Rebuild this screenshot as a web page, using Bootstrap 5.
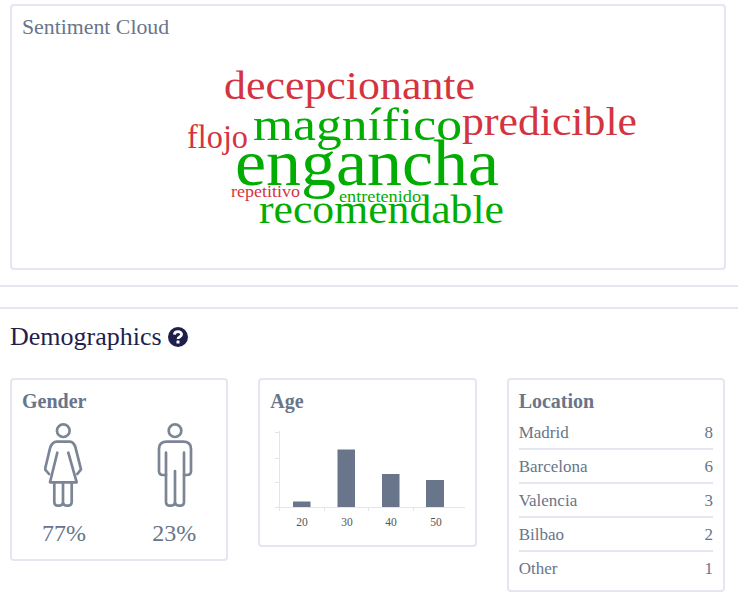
<!DOCTYPE html>
<html lang="en">

<head>
    <meta charset="UTF-8">
    <meta name="viewport" content="width=device-width, initial-scale=1.0">
    <title>Sentiment and Demographics</title>

    <link href="https://cdn.jsdelivr.net/npm/bootstrap@5.3.2/dist/css/bootstrap.min.css" rel="stylesheet">

    <style>
        body {
            background: #fff;
            font-family: "Liberation Serif", serif;
            color: #68758a;
            overflow: hidden;
        }

        .page-pad {
            padding: 4px 12px 0 10px;
        }

        .cards-pad {
            padding: 0 13px 0 10px;
        }

        .panel {
            border: 2px solid #e6e6f3;
            border-radius: 4px;
            background: #fff;
        }

        .panel-inner {
            padding: 10px;
        }

        .panel-title {
            font-size: 20px;
            line-height: 22px;
            padding-bottom: 2px;
            margin: 0;
            color: #68758a;
        }

        .cloud-title {
            font-size: 21.8px;
            font-weight: 400;
            margin-bottom: 10px;
        }

        .cloud-panel svg,
        .age-chart {
            display: block;
        }

        .age-chart {
            overflow: visible;
        }

        .cloud-word {
            font-family: "Liberation Serif", serif;
        }

        .good {
            fill: #00ad00;
        }

        .bad {
            fill: #d4343f;
        }

        .page-rule {
            border: 0;
            border-top: 2px solid #e6e6f3;
            opacity: 1;
            margin: 0;
        }

        .rule-one {
            margin-top: 15px;
        }

        .rule-two {
            margin-top: 20px;
        }

        .demo-head {
            padding: 13px 10px 26px;
            font-size: 26px;
            line-height: 30px;
            color: #1f1f4d;
            gap: 6px;
        }

        .cards-row {
            --bs-gutter-x: 30px;
        }

        .person-cols {
            margin-top: 7px;
        }

        .person {
            width: 84px;
            text-align: center;
        }

        .person svg {
            display: block;
            margin: 0 auto;
        }

        .person-shape {
            fill: none;
            stroke: #7b8595;
            stroke-width: 2.7;
            stroke-linecap: round;
            stroke-linejoin: round;
        }

        .pct {
            font-size: 24px;
            line-height: 30px;
            margin-top: 11px;
            padding-bottom: 1px;
            color: #68758a;
        }

        .place-list {
            margin-top: 2px;
        }

        .place-row {
            display: flex;
            justify-content: space-between;
            font-size: 17px;
            line-height: 24px;
            padding: 5px 0 3px;
            border-bottom: 2px solid #e6e6f3;
        }

        .place-row:last-child {
            border-bottom: 0;
            padding-bottom: 0;
            margin-bottom: -1px;
        }

        .axis-line {
            stroke: #e4e4ec;
            stroke-width: 1;
        }

        .age-bar {
            fill: #68758a;
        }

        .age-label {
            font-size: 11.5px;
            fill: #555;
            text-anchor: middle;
        }
    </style>
</head>

<body>

    <div class="page-pad">
        <div class="panel cloud-panel">
            <div class="panel-inner">
                <h5 class="panel-title cloud-title">Sentiment Cloud</h5>
                <svg width="692" height="208" viewBox="22 50 692 208">
                    <text class="cloud-word bad" x="224" y="99" font-size="41" textLength="251" lengthAdjust="spacingAndGlyphs">decepcionante</text>
                    <text class="cloud-word good" x="253" y="140" font-size="47" textLength="209" lengthAdjust="spacingAndGlyphs">magnífico</text>
                    <text class="cloud-word bad" x="462" y="135" font-size="41" textLength="175" lengthAdjust="spacingAndGlyphs">predicible</text>
                    <text class="cloud-word bad" x="187" y="148" font-size="33" textLength="61" lengthAdjust="spacingAndGlyphs">flojo</text>
                    <text class="cloud-word good" x="235" y="185" font-size="65" textLength="264" lengthAdjust="spacingAndGlyphs">engancha</text>
                    <text class="cloud-word bad" x="231" y="197" font-size="17" textLength="69" lengthAdjust="spacingAndGlyphs">repetitivo</text>
                    <text class="cloud-word good" x="339" y="202" font-size="17" textLength="82" lengthAdjust="spacingAndGlyphs">entretenido</text>
                    <text class="cloud-word good" x="259" y="223" font-size="40" textLength="245" lengthAdjust="spacingAndGlyphs">recomendable</text>
                </svg>
            </div>
        </div>
    </div>

    <hr class="page-rule rule-one">
    <hr class="page-rule rule-two">

    <div class="demo-head d-flex align-items-center">
        <span>Demographics</span>
        <svg width="20" height="20" viewBox="0 0 20 20">
            <circle cx="10" cy="10" r="10" fill="#1f1f4d" />
            <path d="M6.4 7.6 C6.6 3.6 13.6 3.6 13.6 7.4 C13.6 9.8 10 9.6 10 12" fill="none" stroke="#fff" stroke-width="2.8" />
            <rect x="8.5" y="13.4" width="3" height="3" rx=".5" fill="#fff" />
        </svg>
    </div>

    <div class="cards-pad">
        <div class="row cards-row align-items-start">
            <div class="col-4">
                <div class="panel panel-inner">
                    <h5 class="panel-title fw-bold">Gender</h5>
                    <div class="person-cols d-flex justify-content-between">
                        <div class="person">
                            <svg width="40" height="86" viewBox="1 0 40 86">
                                <circle class="person-shape" cx="20.3" cy="9.7" r="6.3" />
                                <path class="person-shape" d="M6 53 L2 48.3 L7 27.3 Q9 20.7 14 20.7 H26.7 Q31 20.7 32.7 27.3 L38 48.3 L34.3 53" />
                                <path class="person-shape" d="M14.3 31.7 L7 61.3 H33.7 L25.3 31.7" />
                                <path class="person-shape" d="M11.3 61.3 V80.7 Q11.3 84.7 15.3 84.7 Q20 84.7 20 80.7 V61.3 M20 80.7 Q20 84.7 24.5 84.7 Q28.7 84.7 28.7 80.7 V61.3" />
                            </svg>
                            <div class="pct">77%</div>
                        </div>
                        <div class="person">
                            <svg width="40" height="86" viewBox="-1 0 40 86">
                                <circle class="person-shape" cx="20" cy="9.7" r="6.3" />
                                <path class="person-shape" d="M11 54 H8 Q4 54 4 50 V28 Q4 20.7 12 20.7 H28 Q36 20.7 36 28 V50 Q36 54 32 54 H29" />
                                <path class="person-shape" d="M11 31.7 V80.7 Q11 84.7 15 84.7 Q20 84.7 20 80.7 V50 M20 80.7 Q20 84.7 25 84.7 Q29 84.7 29 80.7 V31.7" />
                            </svg>
                            <div class="pct">23%</div>
                        </div>
                    </div>
                </div>
            </div>

            <div class="col-4">
                <div class="panel panel-inner">
                    <h5 class="panel-title fw-bold">Age</h5>
                    <svg class="age-chart mt-2" width="194" height="113" viewBox="270 422 194 113">
                        <line class="axis-line" x1="279.5" y1="431" x2="279.5" y2="511" />
                        <line class="axis-line" x1="275" y1="507.5" x2="465" y2="507.5" />
                        <line class="axis-line" x1="275" y1="432.5" x2="279" y2="432.5" />
                        <line class="axis-line" x1="275" y1="458.5" x2="279" y2="458.5" />
                        <line class="axis-line" x1="275" y1="482.5" x2="279" y2="482.5" />
                        <line class="axis-line" x1="324.5" y1="507" x2="324.5" y2="511" />
                        <line class="axis-line" x1="368.5" y1="507" x2="368.5" y2="511" />
                        <line class="axis-line" x1="413.5" y1="507" x2="413.5" y2="511" />
                        <rect class="age-bar" x="293" y="501.5" width="17.5" height="5.5" />
                        <rect class="age-bar" x="337.5" y="449.5" width="17.5" height="57.5" />
                        <rect class="age-bar" x="382" y="474" width="17.5" height="33" />
                        <rect class="age-bar" x="426" y="480" width="18" height="27" />
                        <text class="age-label" x="302" y="526">20</text>
                        <text class="age-label" x="347" y="526">30</text>
                        <text class="age-label" x="391" y="526">40</text>
                        <text class="age-label" x="436" y="526">50</text>
                    </svg>
                </div>
            </div>

            <div class="col-4">
                <div class="panel panel-inner">
                    <h5 class="panel-title fw-bold">Location</h5>
                    <div class="place-list">
                        <div class="place-row"><span>Madrid</span><span>8</span></div>
                        <div class="place-row"><span>Barcelona</span><span>6</span></div>
                        <div class="place-row"><span>Valencia</span><span>3</span></div>
                        <div class="place-row"><span>Bilbao</span><span>2</span></div>
                        <div class="place-row"><span>Other</span><span>1</span></div>
                    </div>
                </div>
            </div>
        </div>
    </div>

    <script src="https://cdn.jsdelivr.net/npm/bootstrap@5.3.2/dist/js/bootstrap.bundle.min.js"></script>
</body>

</html>
